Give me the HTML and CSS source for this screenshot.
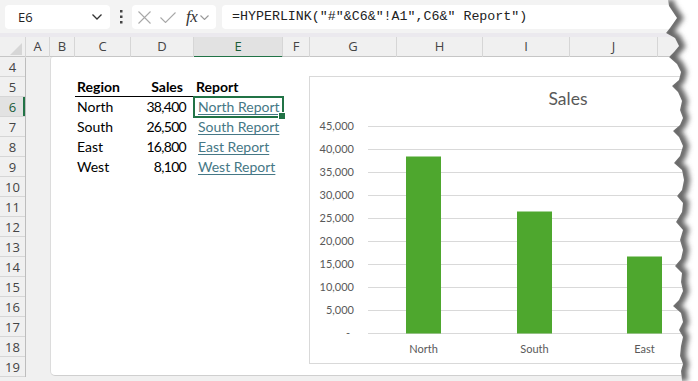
FILE: index.html
```html
<!DOCTYPE html>
<html>
<head>
<meta charset="utf-8">
<link rel="stylesheet" href="styles.css">
</head>
<body>
<div class="app">
  <div class="toolbar">
    <div class="namebox">
      <span>E6</span>
      <svg class="chev" width="10" height="6" viewBox="0 0 10 6"><polyline points="0.5,0.5 5,5 9.5,0.5" fill="none" stroke="#333" stroke-width="1.3"/></svg>
    </div>
    <div class="grip">
      <svg width="3" height="14" viewBox="0 0 3 14"><rect x="0" y="0" width="2.5" height="2.5" fill="#444"/><rect x="0" y="5.5" width="2.5" height="2.5" fill="#444"/><rect x="0" y="11" width="2.5" height="2.5" fill="#444"/></svg>
    </div>
    <div class="fxbox">
      <svg class="ico-x" width="13" height="13" viewBox="0 0 13 13"><path d="M0.5 0.5 L12.5 12.5 M12.5 0.5 L0.5 12.5" stroke="#a8a8a8" stroke-width="1.1" fill="none"/></svg>
      <svg class="ico-ok" width="16" height="11" viewBox="0 0 16 11"><polyline points="0.5,5.5 5.5,10.5 15.5,0.5" stroke="#a8a8a8" stroke-width="1.1" fill="none"/></svg>
      <span class="fx">fx</span>
      <svg class="chev2" width="9" height="5" viewBox="0 0 9 5"><polyline points="0.5,0.5 4.5,4.5 8.5,0.5" fill="none" stroke="#999" stroke-width="1.1"/></svg>
    </div>
    <div class="formula">=HYPERLINK("#"&amp;C6&amp;"!A1",C6&amp;" Report")</div>
  </div>
  <div class="band"></div>
  <div class="colheads">
    <div class="corner"></div>
    <div class="ch">A</div>
    <div class="ch">B</div>
    <div class="ch">C</div>
    <div class="ch">D</div>
    <div class="ch sel">E</div>
    <div class="ch">F</div>
    <div class="ch">G</div>
    <div class="ch">H</div>
    <div class="ch">I</div>
    <div class="ch">J</div>
    <div class="ch"></div>
  </div>
  <div class="sheet">
    <div class="rowheads">
      <div class="rh">4</div>
      <div class="rh">5</div>
      <div class="rh sel">6</div>
      <div class="rh">7</div>
      <div class="rh">8</div>
      <div class="rh">9</div>
      <div class="rh">10</div>
      <div class="rh">11</div>
      <div class="rh">12</div>
      <div class="rh">13</div>
      <div class="rh">14</div>
      <div class="rh">15</div>
      <div class="rh">16</div>
      <div class="rh">17</div>
      <div class="rh">18</div>
      <div class="rh">19</div>
    </div>
    <div class="cola"></div>
    <div class="panel">
      <div class="table">
        <div class="cell hd">Region</div>
        <div class="cell hd num hdnum">Sales</div>
        <div class="cell hd">Report</div>

        <div class="cell">North</div>
        <div class="cell num">38,400</div>
        <div class="cell link active"><span>North Report</span></div>

        <div class="cell">South</div>
        <div class="cell num">26,500</div>
        <div class="cell link"><span>South Report</span></div>

        <div class="cell">East</div>
        <div class="cell num">16,800</div>
        <div class="cell link"><span>East Report</span></div>

        <div class="cell">West</div>
        <div class="cell num">8,100</div>
        <div class="cell link"><span>West Report</span></div>
      </div>
      <div class="chart">
        <svg width="398" height="286" viewBox="0 0 398 286">
          <text class="title" x="258" y="28" text-anchor="middle">Sales</text>
          <g class="grid" stroke="#d9d9d9" stroke-width="1">
            <line x1="58" x2="398" y1="49.5" y2="49.5"/>
            <line x1="58" x2="398" y1="72.5" y2="72.5"/>
            <line x1="58" x2="398" y1="95.5" y2="95.5"/>
            <line x1="58" x2="398" y1="118.5" y2="118.5"/>
            <line x1="58" x2="398" y1="141.5" y2="141.5"/>
            <line x1="58" x2="398" y1="164.5" y2="164.5"/>
            <line x1="58" x2="398" y1="187.5" y2="187.5"/>
            <line x1="58" x2="398" y1="210.5" y2="210.5"/>
            <line x1="58" x2="398" y1="233.5" y2="233.5"/>
            <line x1="58" x2="398" y1="256.5" y2="256.5"/>
          </g>
          <g class="ylab" text-anchor="end">
            <text x="44" y="53">45,000</text>
            <text x="44" y="76">40,000</text>
            <text x="44" y="99">35,000</text>
            <text x="44" y="122">30,000</text>
            <text x="44" y="145">25,000</text>
            <text x="44" y="168">20,000</text>
            <text x="44" y="191">15,000</text>
            <text x="44" y="214">10,000</text>
            <text x="44" y="237">5,000</text>
            <text x="40" y="260">-</text>
          </g>
          <g fill="#4ea72e">
            <rect x="96" y="79.5" width="35" height="177"/>
            <rect x="207" y="134.5" width="35" height="122"/>
            <rect x="317" y="179.5" width="35" height="77"/>
          </g>
          <g class="xlab" text-anchor="middle">
            <text x="113.5" y="276">North</text>
            <text x="224.5" y="276">South</text>
            <text x="334.5" y="276">East</text>
          </g>
        </svg>
      </div>
    </div>
  </div>
  <div class="foot"></div>
  <svg class="tear" width="43" height="381" viewBox="0 0 43 381">
    <defs>
      <clipPath id="tearclip">
        <polygon points="13,0 14,6 18,12 22,18 15,28 11,33 20,38 24,46 19,52 14,57 22,64 26,72 24,80 17,86 23,92 27,101 25,110 28,118 25,125 18,131 24,137 28,146 25,156 19,163 27,170 29,180 27,190 22,196 28,203 27,212 21,222 28,230 25,240 28,250 26,259 20,266 27,273 26,282 28,291 24,300 18,306 26,313 28,322 24,330 28,337 26,346 25,356 28,364 26,371 27,381 43,381 43,0"/>
      </clipPath>
      <filter id="blur" x="-50%" y="-5%" width="200%" height="110%">
        <feGaussianBlur stdDeviation="2.5"/>
      </filter>
    </defs>
    <polygon fill="#fff" points="13,0 14,6 18,12 22,18 15,28 11,33 20,38 24,46 19,52 14,57 22,64 26,72 24,80 17,86 23,92 27,101 25,110 28,118 25,125 18,131 24,137 28,146 25,156 19,163 27,170 29,180 27,190 22,196 28,203 27,212 21,222 28,230 25,240 28,250 26,259 20,266 27,273 26,282 28,291 24,300 18,306 26,313 28,322 24,330 28,337 26,346 25,356 28,364 26,371 27,381 43,381 43,0"/>
    <g clip-path="url(#tearclip)">
      <polyline filter="url(#blur)" fill="none" stroke="#676767" stroke-width="9" transform="translate(1.5,0)" points="13,0 14,6 18,12 22,18 15,28 11,33 20,38 24,46 19,52 14,57 22,64 26,72 24,80 17,86 23,92 27,101 25,110 28,118 25,125 18,131 24,137 28,146 25,156 19,163 27,170 29,180 27,190 22,196 28,203 27,212 21,222 28,230 25,240 28,250 26,259 20,266 27,273 26,282 28,291 24,300 18,306 26,313 28,322 24,330 28,337 26,346 25,356 28,364 26,371 27,381"/>
    </g>
  </svg>
</div>
</body>
</html>
```

FILE: styles.css
```css
* { box-sizing: border-box; margin: 0; padding: 0; }
html, body { width: 698px; height: 381px; overflow: hidden; background: #fff; }
body { font-family: "Open Sans", "Noto Sans", sans-serif; }

.app { position: relative; width: 698px; height: 381px; overflow: hidden; background: #f0f0f0; }

/* formula bar */
.toolbar { height: 33px; background: #f3f3f3; display: flex; align-items: flex-start; padding: 5px 0 0 5px; }
.namebox { width: 105px; height: 24px; background: #fff; border-radius: 4px; display: flex; align-items: center; justify-content: space-between; padding: 0 8px 0 13px; font-size: 13px; color: #222; }
.grip { width: 22px; height: 24px; display: flex; align-items: center; justify-content: center; }
.fxbox { width: 84px; height: 24px; background: #fff; border-radius: 4px; display: flex; align-items: center; padding-left: 6px; }
.ico-x { margin-right: 9px; }
.ico-ok { margin-right: 10px; }
.fx { font-family: "Liberation Serif", serif; font-style: italic; font-size: 17px; color: #333; line-height: 24px; margin-right: 3px; letter-spacing: -0.5px; }
.chev2 { margin-top: 1px; }
.formula { flex: 1; margin-left: 6px; height: 24px; background: #fff; border-radius: 4px 0 0 4px; font-family: "Liberation Mono", monospace; font-size: 13.3px; color: #222; padding-left: 10px; line-height: 24px; white-space: nowrap; overflow: hidden; }
.band { height: 4px; background: #ebe9ee; }

/* column headers */
.colheads { display: grid; grid-template-columns: 26px 24px 25px 56px 63px 89px 27px 87px 86px 87px 88px 1fr; height: 20px; background: #f0f0f0; border-bottom: 1px solid #c6c6c6; }
.corner { position: relative; border-right: 1px solid #d6d6d6; }
.corner::after { content: ""; position: absolute; right: 3px; bottom: 3px; width: 0; height: 0; border-left: 12px solid transparent; border-bottom: 12px solid #d6d6d6; }
.ch { border-right: 1px solid #d6d6d6; text-align: center; font-size: 13px; color: #444; line-height: 19px; }
.ch.sel { background: #e2e2e2; border-bottom: 2px solid #217346; color: #185c37; }

/* sheet body */
.sheet { display: grid; grid-template-columns: 26px 24px 1fr; height: 320px; }
.rowheads { background: #f0f0f0; border-right: 1px solid #bdbdbd; }
.rh { height: 20px; border-bottom: 1px solid #d6d6d6; text-align: center; font-size: 13px; color: #444; line-height: 20px; }
.rh.sel { background: #e2e2e2; box-shadow: inset -2px 0 0 #217346; color: #185c37; }
.cola { background: #f0f0f0; }
.panel { background: #fff; height: 319px; border-left: 1px solid #dcdcdc; border-bottom: 1px solid #cfcfcf; border-radius: 3px 0 0 5px; display: flex; align-items: flex-start; gap: 26px; padding: 20px 0 0 24px; overflow: hidden; }
.foot { height: 4px; background: #f0f0f0; }

/* data table */
.table { display: grid; grid-template-columns: 56px 63px 89px; grid-auto-rows: 20px; font-family: "Lato", "Liberation Sans", sans-serif; font-size: 14px; color: #000; flex: none; }
.cell { line-height: 20px; padding-left: 2px; white-space: nowrap; }
.hd { font-weight: bold; border-bottom: 1px solid #000; line-height: 19px; }
.num { text-align: right; padding-right: 8px; padding-left: 0; letter-spacing: -0.7px; }
.hdnum { padding-right: 11px; letter-spacing: 0; }
.link { padding-left: 4px; color: #467886; }
.link span { text-decoration: underline; text-underline-offset: 2px; }
.active { position: relative; }
.active::before { content: ""; position: absolute; left: -1px; top: -1px; right: -1px; bottom: -1px; border: 2px solid #217346; }
.active::after { content: ""; position: absolute; right: -3px; bottom: -3px; width: 6px; height: 6px; background: #217346; border: 1px solid #fff; }

/* chart */
.chart { flex: none; width: 400px; height: 288px; margin-top: -1px; border: 1px solid #d9d9d9; border-right: none; background: #fff; }
.chart svg { display: block; }
.title { font-family: "Lato", "Liberation Sans", sans-serif; font-size: 17.5px; fill: #595959; }
.ylab text, .xlab text { font-family: "Lato", "Liberation Sans", sans-serif; font-size: 11px; fill: #595959; }

/* torn edge */
.tear { position: absolute; left: 655px; top: 0; }
```
